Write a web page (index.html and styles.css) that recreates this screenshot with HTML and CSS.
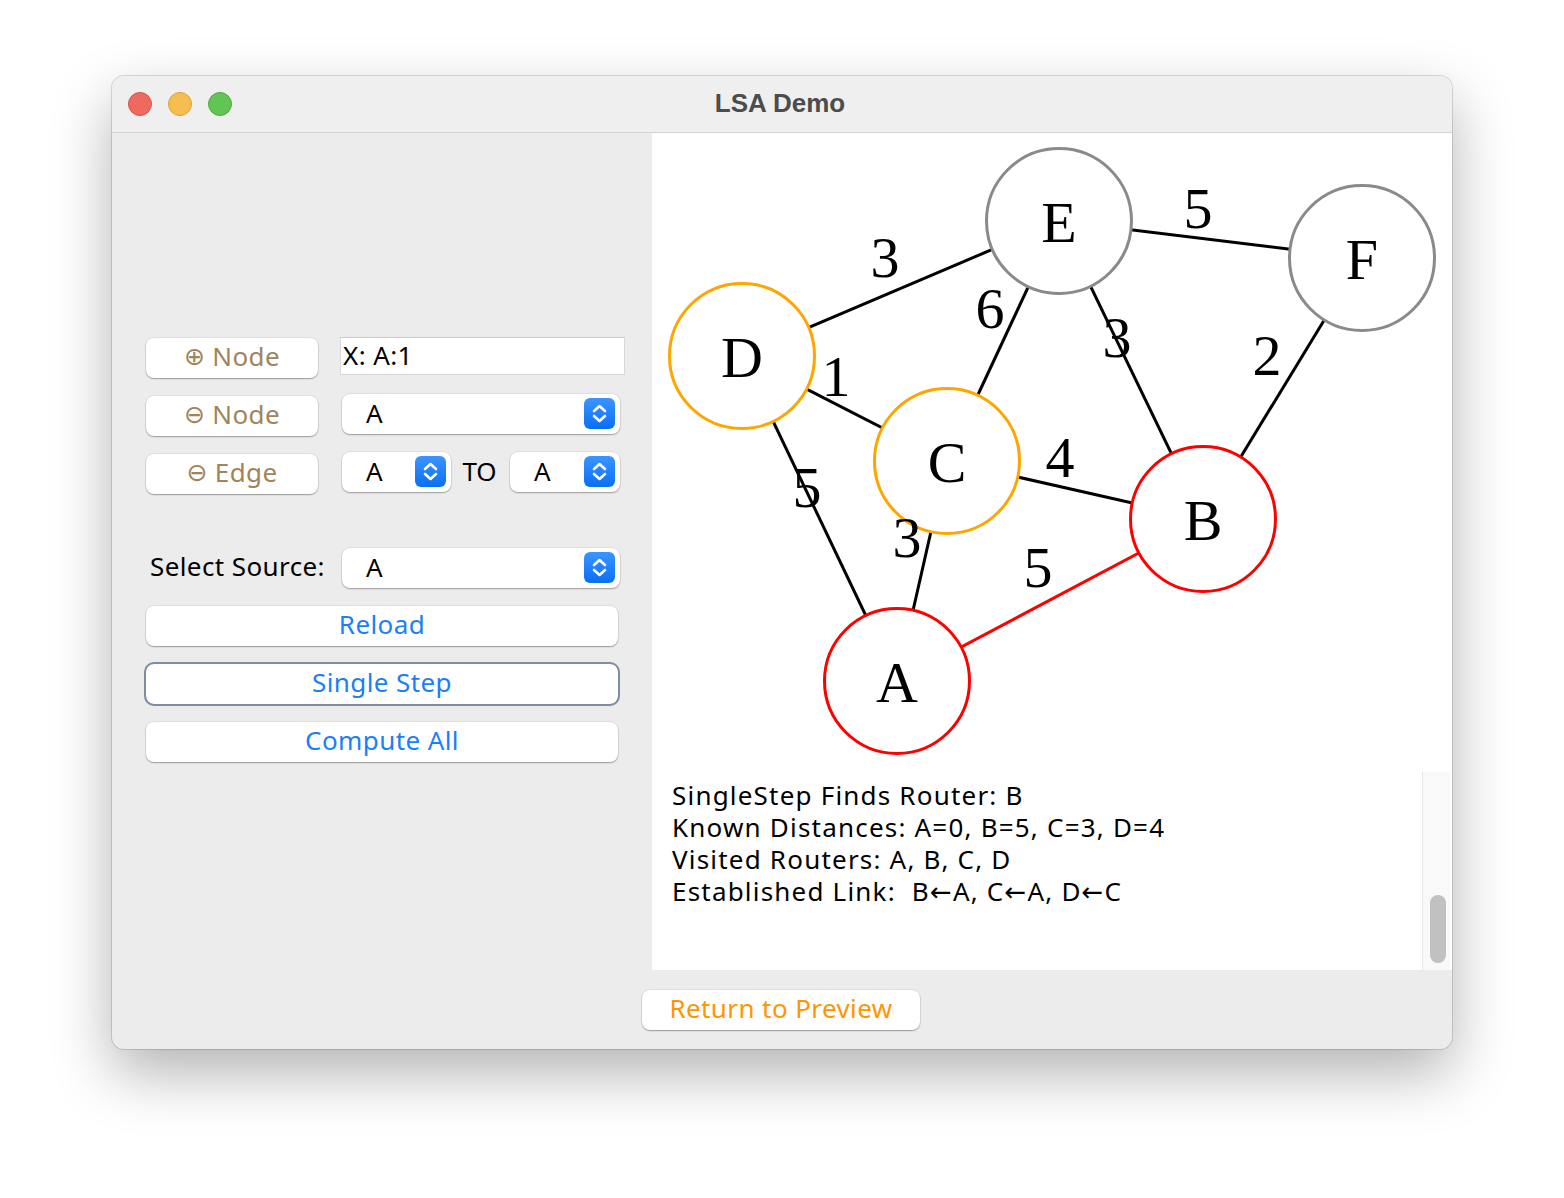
FILE: index.html
```html
<!DOCTYPE html>
<html>
<head>
<meta charset="utf-8">
<title>LSA Demo</title>
<link rel="stylesheet" href="styles.css">
</head>
<body>
<div class="window">
  <div class="titlebar">
    <div class="lights">
      <span class="light red"></span>
      <span class="light yellow"></span>
      <span class="light green"></span>
    </div>
    <div class="title">LSA Demo</div>
    <div></div>
  </div>
  <div class="main">
    <div class="left">
      <div class="row">
        <button class="btn tool"><span class="sym">⊕</span> Node</button>
        <div class="field">X: A:1</div>
      </div>
      <div class="row">
        <button class="btn tool"><span class="sym">⊖</span> Node</button>
        <div class="combo"><span class="val">A</span><span class="arrows"><svg viewBox="0 0 31 31" width="31" height="31"><path d="M10 13 L15.5 8 L21 13 M10 18 L15.5 23 L21 18" fill="none" stroke="#fff" stroke-width="2.6" stroke-linecap="round" stroke-linejoin="round"/></svg></span></div>
      </div>
      <div class="row gap-big">
        <button class="btn tool"><span class="sym">⊖</span> Edge</button>
        <div class="pair">
          <div class="combo small"><span class="val">A</span><span class="arrows"><svg viewBox="0 0 31 31" width="31" height="31"><path d="M10 13 L15.5 8 L21 13 M10 18 L15.5 23 L21 18" fill="none" stroke="#fff" stroke-width="2.6" stroke-linecap="round" stroke-linejoin="round"/></svg></span></div>
          <span class="to">TO</span>
          <div class="combo small"><span class="val">A</span><span class="arrows"><svg viewBox="0 0 31 31" width="31" height="31"><path d="M10 13 L15.5 8 L21 13 M10 18 L15.5 23 L21 18" fill="none" stroke="#fff" stroke-width="2.6" stroke-linecap="round" stroke-linejoin="round"/></svg></span></div>
        </div>
      </div>
      <div class="row source">
        <span class="label">Select Source:</span>
        <div class="combo"><span class="val">A</span><span class="arrows"><svg viewBox="0 0 31 31" width="31" height="31"><path d="M10 13 L15.5 8 L21 13 M10 18 L15.5 23 L21 18" fill="none" stroke="#fff" stroke-width="2.6" stroke-linecap="round" stroke-linejoin="round"/></svg></span></div>
      </div>
      <button class="btn action">Reload</button>
      <button class="btn action focus">Single Step</button>
      <button class="btn action">Compute All</button>
    </div>
    <div class="right">
      <svg class="graph" viewBox="0 0 800 637" width="800" height="637">
        <g stroke="#000" stroke-width="3">
          <line x1="90" y1="223" x2="407" y2="88"/>
          <line x1="407" y1="88" x2="295" y2="328"/>
          <line x1="90" y1="223" x2="295" y2="328"/>
          <line x1="90" y1="223" x2="245" y2="548"/>
          <line x1="295" y1="328" x2="245" y2="548"/>
          <line x1="295" y1="328" x2="551" y2="386"/>
          <line x1="407" y1="88" x2="551" y2="386"/>
          <line x1="407" y1="88" x2="710" y2="125"/>
          <line x1="710" y1="125" x2="551" y2="386"/>
          <line x1="245" y1="548" x2="551" y2="386" stroke="#ff0000"/>
        </g>
        <g fill="#fff" stroke-width="3">
          <circle cx="407" cy="88" r="72.5" stroke="#8a8a8a"/>
          <circle cx="710" cy="125" r="72.5" stroke="#8a8a8a"/>
          <circle cx="90" cy="223" r="72.5" stroke="#ffa500"/>
          <circle cx="295" cy="328" r="72.5" stroke="#ffa500"/>
          <circle cx="551" cy="386" r="72.5" stroke="#ff0000"/>
          <circle cx="245" cy="548" r="72.5" stroke="#ff0000"/>
        </g>
        <g class="serif" text-anchor="middle" fill="#000">
          <text x="407" y="109">E</text>
          <text x="710" y="146">F</text>
          <text x="90" y="244">D</text>
          <text x="295" y="349">C</text>
          <text x="551" y="407">B</text>
          <text x="245" y="569">A</text>
          <text x="233" y="144">3</text>
          <text x="338" y="195">6</text>
          <text x="184" y="263">1</text>
          <text x="546" y="95">5</text>
          <text x="465" y="224">3</text>
          <text x="615" y="242">2</text>
          <text x="155" y="374">5</text>
          <text x="408" y="344">4</text>
          <text x="255" y="424">3</text>
          <text x="386" y="454">5</text>
        </g>
      </svg>
      <div class="log">
        <div class="log-text">SingleStep Finds Router: B
Known Distances: A=0, B=5, C=3, D=4
Visited Routers: A, B, C, D
Established Link:  B←A, C←A, D←C</div>
        <div class="track"><div class="thumb"></div></div>
      </div>
    </div>
  </div>
  <div class="bottom">
    <button class="btn ret">Return to Preview</button>
  </div>
</div>
</body>
</html>
```

FILE: styles.css
```css
* { box-sizing: border-box; }
html, body { margin: 0; }
body {
  background: #ffffff;
  padding: 76px 0 0 112px;
  width: 1564px;
  height: 1198px;
  overflow: hidden;
  font-family: "Noto Sans", "Open Sans", sans-serif;
}
.window {
  width: 1340px;
  height: 973px;
  border-radius: 12px;
  background: #ececec;
  box-shadow: 0 24px 60px rgba(0,0,0,0.30), 0 0 0 1px rgba(0,0,0,0.13);
  overflow: hidden;
  display: flex;
  flex-direction: column;
}
.titlebar {
  height: 57px;
  flex: none;
  background: #efefef;
  border-bottom: 1px solid #d3d3d3;
  display: grid;
  grid-template-columns: 1fr auto 1fr;
  align-items: center;
}
.lights { display: flex; gap: 16px; padding-left: 16px; padding-top: 0; }
.light { width: 24px; height: 24px; border-radius: 50%; display: block; }
.light.red { background: #ee6a5f; border: 1px solid #d85248; }
.light.yellow { background: #f5be4f; border: 1px solid #dca136; }
.light.green { background: #61c554; border: 1px solid #4faa41; }
.title {
  font-family: "Liberation Sans", Arial, sans-serif;
  font-weight: bold;
  font-size: 26px;
  color: #4c4c4c;
  margin-left: -4px;
  padding-bottom: 2px;
}
.main { display: flex; height: 837px; flex: none; }
.left {
  width: 540px;
  padding: 205px 0 0 34px;
  display: flex;
  flex-direction: column;
  align-items: flex-start;
}
.row {
  display: grid;
  grid-template-columns: 172px 278px;
  column-gap: 24px;
  height: 40px;
  margin-bottom: 18px;
  align-items: start;
}
.row.gap-big { margin-bottom: 54px; }
.btn {
  font-family: "Noto Sans", "Open Sans", sans-serif;
  font-size: 26px;
  letter-spacing: 0.4px;
  background: #ffffff;
  border: none;
  border-radius: 8px;
  box-shadow: 0 1px 1.5px rgba(0,0,0,0.32), 0 0 0 0.5px rgba(0,0,0,0.10);
  height: 40px;
  padding: 0 0 4px 0;
  line-height: 36px;
  display: flex;
  align-items: center;
  justify-content: center;
}
.tool { width: 172px; color: #a0845b; }
.tool .sym { font-size: 25px; margin-right: 7px; font-family: "DejaVu Sans", sans-serif; line-height: 30px; padding-top: 2px; }
.field {
  margin: -1px 0 0 -2px;
  width: 285px;
  height: 38px;
  background: #fff;
  border: 1px solid #d8d8d8;
  border-top-color: #cbcbcb;
  font-size: 26px;
  line-height: 34px;
  padding-left: 2px;
  letter-spacing: 0.4px;
  color: #000;
}
.combo {
  margin-top: -2px;
  width: 278px;
  height: 40px;
  background: #fff;
  border-radius: 8px;
  box-shadow: 0 1px 1.5px rgba(0,0,0,0.30), 0 0 0 0.5px rgba(0,0,0,0.10);
  display: flex;
  align-items: center;
  justify-content: space-between;
  padding: 0 5px 1px 24px;
}
.combo .val { font-size: 26px; color: #000; line-height: 36px; padding-bottom: 2px; }
.arrows {
  width: 31px;
  height: 31px;
  border-radius: 6px;
  background: linear-gradient(#3c94ff, #0a6ff4);
  display: block;
}
.arrows svg { display: block; }
.pair { display: flex; align-items: flex-start; justify-content: space-between; width: 278px; }
.combo.small { width: 109px; }
.pair .combo.small:last-child { width: 110px; }
.to { font-size: 26px; color: #000; line-height: 36px; margin-top: -1px; padding-right: 2px; }
.source .label { font-size: 26px; color: #000; padding-left: 4px; line-height: 36px; white-space: nowrap; letter-spacing: 0.4px; }
.source .combo { margin-top: 0; }
.action { width: 472px; color: #1a7ff8; margin-bottom: 18px; }
.action.focus { outline: 2.5px solid #7f8da3; outline-offset: 0; }
.right { width: 800px; background: #fff; display: flex; flex-direction: column; }
.graph { display: block; width: 800px; height: 637px; flex: none; }
.serif { font-family: "Liberation Serif", "Times New Roman", serif; font-size: 58px; }
.log { flex: 1; display: flex; }
.log-text {
  flex: 1;
  padding: 9px 0 0 20px;
  font-family: "Noto Sans", "DejaVu Sans", sans-serif;
  font-size: 26px;
  line-height: 32px;
  letter-spacing: 1.2px;
  white-space: pre;
  color: #000;
}
.track {
  width: 28px;
  margin: 2px 2px 0 0;
  background: #f9f9f9;
  border-left: 1px solid #e6e6e6;
  padding: 123px 0 0 7px;
}
.thumb { width: 16px; height: 68px; border-radius: 8px; background: #c1c1c1; }
.bottom { flex: 1; display: flex; justify-content: center; padding: 20px 0 0 0; }
.ret { width: 278px; color: #ff9500; margin-left: -2px; }
```
